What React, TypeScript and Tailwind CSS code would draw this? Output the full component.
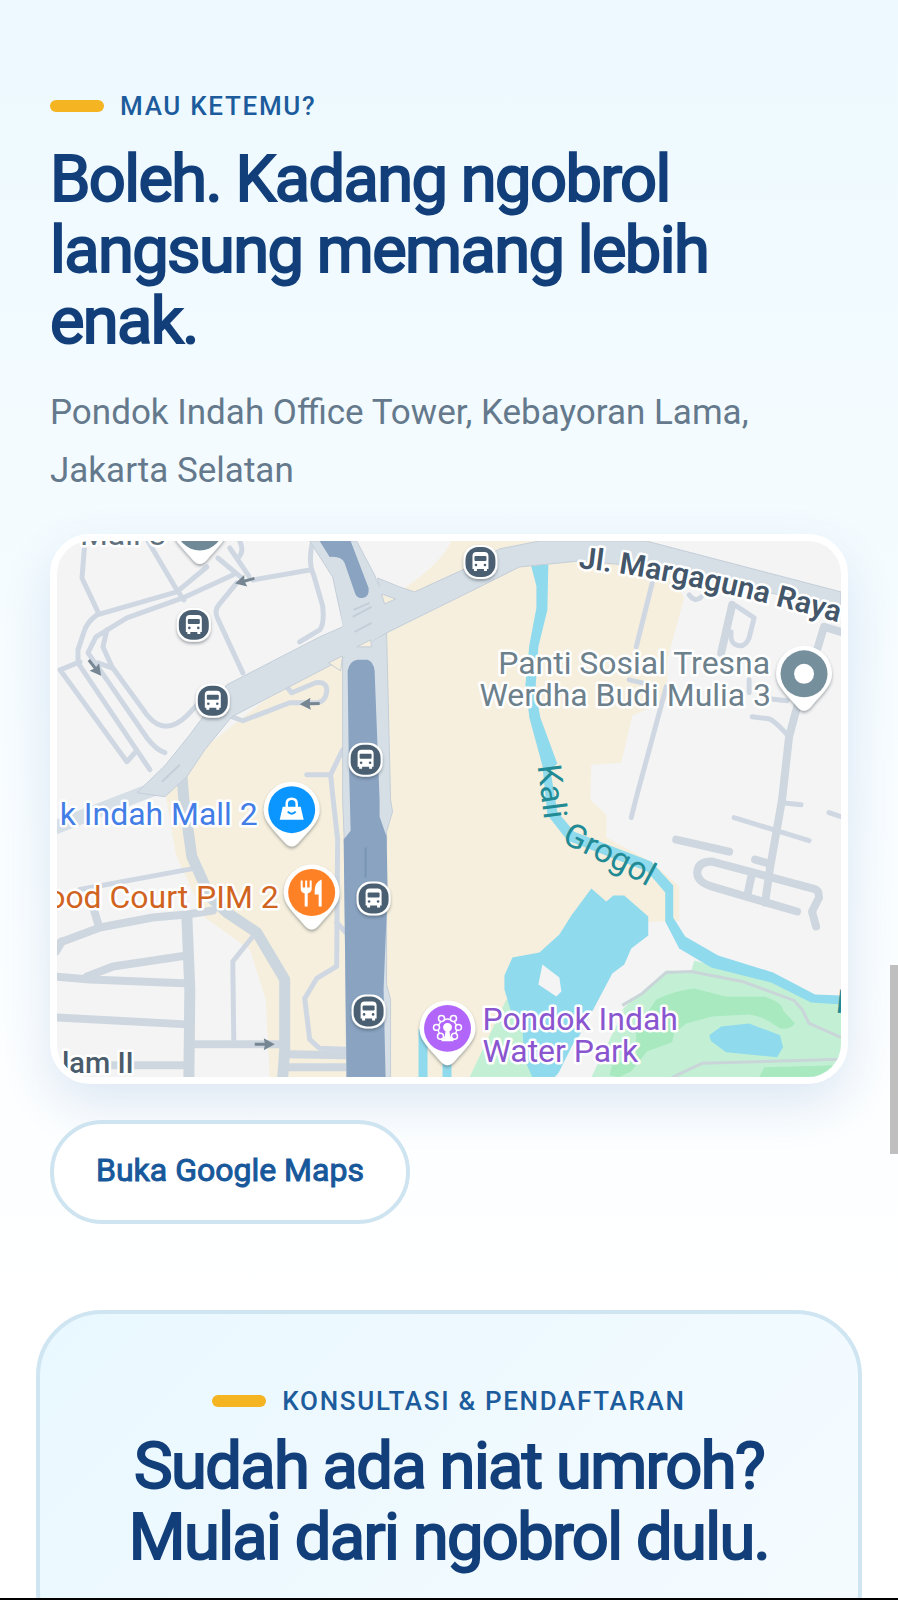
import type { ReactNode } from "react";

type Point = { x: number; y: number };

const busStops: Point[] = [
  { x: 194, y: 625 },
  { x: 213, y: 701 },
  { x: 481, y: 562 },
  { x: 366, y: 760 },
  { x: 374, y: 899 },
  { x: 369, y: 1012 },
];

const arrows = [
  { x: 245, y: 581, angle: 165 },
  { x: 95, y: 668, angle: 52 },
  { x: 310, y: 704, angle: 178 },
  { x: 265, y: 1045, angle: 0 },
];

const narrowRoads = [
  "M85 541 L82 578 L98 612",
  "M148 541 L177 590 L184 600",
  "M207 567 L177 592 L97 615 Q87 622 84 632 L78 650 L78 663 L150 770",
  "M233 575 L183 598 L127 618 L96 637 L88 653 L107 680 L147 738 Q156 750 165 753",
  "M107 630 L103 647 L112 667 L147 715 Q165 738 188 715 L205 697",
  "M80 662 L60 670 L127 762 L135 753",
  "M98 663 L112 668",
  "M237 583 L219 605 Q214 611 218 619 L243 673",
  "M253 580 L310 570",
  "M218 558 L242 578",
  "M230 548 L249 576",
  "M240 541 Q245 552 238 558",
  "M313 541 Q308 562 314 575 L323 606 Q325 624 320 630 L300 642",
  "M287 687 L292 693 L316 683 Q328 681 327 692 Q326 702 317 703 L290 703 L243 721 L232 717",
  "M307 775 L331 775 L343 750",
  "M331 775 L333 795 L338 840 L337 967 L317 979 L305 999 L310 1040 L320 1049 L347 1050",
  "M337 923 L348 935",
  "M80 890 L193 869",
  "M253 937 L233 962 L234 1042",
  "M653 583 L637 647",
  "M630 680 L643 683",
  "M667 687 L660 713 L637 798 L632 818",
  "M690 595 Q696 603 702 597",
  "M737 606 L755 618 L750 638 Q745 650 735 644 Q731 641 732 632",
  "M753 717 L770 719 Q776 721 790 737",
  "M750 680 L750 693 M770 699 L788 701",
  "M783 803 L802 805",
  "M830 813 L842 817",
  "M735 818 L810 841",
];

const streetRoads = [
  "M60 943 L100 928 L153 918 L187 915 L213 911",
  "M93 907 L99 927",
  "M87 977 L113 967 L187 956",
  "M56 952 L62 942",
  "M54 977 L90 980 L190 984",
  "M54 1018 L187 1025",
  "M107 1066 L187 1066",
  "M193 1045 L283 1045",
  "M288 1055 L347 1056",
  "M288 1068 L347 1068",
  "M733 605 L722 653",
  "M800 700 L790 737 L783 800 L771 868 L766 903",
  "M842 632 L825 627 L818 650",
  "M677 840 L730 852",
  "M756 860 L770 864",
  "M817 927 L813 912 L820 898 Q820 890 814 889 L773 878 L713 862 Q698 862 698 874 Q699 883 713 887 L798 912",
  "M752 878 L748 897",
];

const MapPin = ({
  x,
  y,
  color,
  children,
}: Point & { color: string; children?: ReactNode }) => (
  <g transform={`translate(${x} ${y})`}>
    <path
      d="M-28 0 A28 28 0 1 1 28 0 C28 12 18 20 7 33 Q0 41 -7 33 C-18 20 -28 12 -28 0Z"
      fill="#fff"
      filter="url(#pin-shadow)"
    />
    <circle r="23.5" fill={color} />
    {children}
  </g>
);

const BusStop = ({ x, y }: Point) => (
  <g transform={`translate(${x} ${y})`}>
    <rect
      x="-17"
      y="-17"
      width="34"
      height="34"
      rx="14"
      fill="#fff"
      filter="url(#pin-shadow)"
    />
    <rect x="-15" y="-15" width="30" height="30" rx="13" fill="#4a6072" />
    <path
      d="M-8 -6 Q-8 -10 -4 -10 H4 Q8 -10 8 -6 V7 H6.500 V9 H3.500 V7 H-3.500 V9 H-6.500 V7 H-8Z"
      fill="#fff"
    />
    <rect x="-6" y="-6" width="12" height="5" rx="1" fill="#4a6072" />
    <circle cx="-4.500" cy="3" r="1.300" fill="#4a6072" />
    <circle cx="4.500" cy="3" r="1.300" fill="#4a6072" />
  </g>
);

const LocationMap = () => (
  <svg
    viewBox="57 541 785 537"
    className="block w-full"
    role="img"
    aria-label="Pondok Indah"
    fontFamily="Roboto, sans-serif"
  >
    <defs>
      <filter id="pin-shadow" x="-30%" y="-30%" width="160%" height="170%">
        <feDropShadow
          dx="0"
          dy="2"
          stdDeviation="1.500"
          floodColor="#3c4650"
          floodOpacity="0.45"
        />
      </filter>
      <path id="main-street" d="M579 568 Q690 580 860 628" />
      <path id="kali" d="M538 766 L546 828" />
      <path id="grogol" d="M562 843 Q600 860 665 896" />
    </defs>

    <rect x="57" y="541" width="785" height="537" fill="#f4f4f4" />

    {/* commercial area */}
    <path
      d="M240 720 L330 650 L405 588 Q440 565 452 541 L653 541 L685 598 L668 660 L668 700 L633 716 L622 763 L592 765 L591 800 L607 815 L607 838 L653 863 L680 887 L680 921 L600 925 L507 1003 L470 1078 L270 1078 L266 1000 L250 950 L205 918 L176 855 L165 790 L190 760 Z"
      fill="#f6efdd"
    />

    {/* park */}
    <path
      d="M507 1000 L470 1078 L540 1078 L540 1000Z M583 1078 L603 1035 L625 1008 L667 971 L692 972 L695 961 L713 966 L775 981 L810 1000 L842 1003 L842 1078Z"
      fill="#c3f0d4"
    />
    <path
      d="M637 1030 L657 1000 Q675 991 695 989 L727 997 L765 997 Q784 1003 784 1011 L796 1024 Q790 1031 781 1029 Q765 1017 750 1015 L713 1017 L687 1024 L675 1034 L673 1043 L648 1052 L632 1072 L620 1078 L610 1076 L613 1066 L637 1057Z"
      fill="#a9e9c0"
    />
    <path d="M765 1068 L835 1066 L842 1078 L760 1078Z" fill="#a9e9c0" />
    <g fill="none" stroke="#c9d5d8" strokeWidth="3">
      <path d="M623 1006 L643 994 L667 973 L692 972 L743 982 L795 1001 L803 1010 L810 1024 L842 1038" />
      <path d="M673 1078 L703 1064 L842 1060" />
    </g>

    {/* water */}
    <g fill="#90daed">
      <path d="M710 1036 L722 1027 L750 1024 L781 1036 L784 1048 L778 1058 L727 1053 L712 1042Z" />
      <path d="M513 958 L540 953 L560 935 L572 916 L592 889 L607 902 L614 896 L625 896 L649 917 L649 936 L632 949 L625 965 L613 974 L595 1008 L577 1042 L563 1070 L555 1078 L533 1078 L525 1060 L523 1030 L511 1010 L505 990 L505 976Z" />
      <path d="M419 1030 H428 V1078 H419Z M443 1050 H452 V1078 H443Z" />
    </g>
    <path
      d="M543 965 L560 978 L562 992 L557 997 L539 985Z M575 1042 L625 1010 L592 1078 L557 1078Z"
      fill="#f4f4f4"
    />
    <path
      d="M531 563 L549 563 L548 610 L539 647 L536 690 L541 718 L558 764 L551 770 L558 812 L575 832 L652 862 L674 886 L674 918 L686 937 L719 956 L774 973 L816 995 L842 996 L842 1005 L812 1003 L772 983 L712 968 L680 949 L666 922 L666 893 L648 872 L568 841 L548 815 L543 766 L530 718 L526 685 L530 645 L537 608 L537 586Z"
      fill="#90daed"
    />

    {/* streets */}
    <g fill="none" strokeLinecap="round" strokeLinejoin="round">
      <g stroke="#cfd8e2" strokeWidth="5">
        {narrowRoads.map((d) => (
          <path key={d} d={d} />
        ))}
      </g>
      <g stroke="#ced7df" strokeWidth="8">
        {streetRoads.map((d) => (
          <path key={d} d={d} />
        ))}
      </g>
      <g stroke="#ccd6de" strokeWidth="11">
        <path d="M182 775 L184 800 L192 857 L210 897 L227 913 L257 933 L285 980 L285 1050 L283 1078" />
        <path d="M187 917 L190 990 L189 1084" />
      </g>
      <path d="M50 830 L90 814 L165 785" stroke="#d6dee6" strokeWidth="14" />
    </g>

    {/* main roads */}
    <g fill="#d6dfe6" stroke="#c4ced8" strokeWidth="1">
      <path d="M310 541 L357 541 L375 575 L384 600 L387 633 L391 800 L393 812 L387 832 L387 985 L391 1000 L391 1078 L347 1078 L345 850 L343 800 L343 623 L333 577Z" />
      <path d="M137 793 L165 766 L190 735 L227 685 L320 637 L345 626 L382 598 L378 578 L400 587 L415 592 L463 570 L500 549 L540 541 L647 541 L842 592 L842 608 L700 578 L640 566 L580 561 L520 567 L470 592 L387 633 L330 666 L232 717 L205 750 L187 777 L165 797Z" />
    </g>
    <path d="M341 605 L376 580 L386 598 L386 632 L345 661Z" fill="#d6dfe6" />
    <g fill="#f6efdd" stroke="#c4ced8" strokeWidth="1">
      <path d="M382 594 L396 599 L385 604Z" />
      <path d="M357 647 L371 640 L372 647Z" />
      <path d="M329 663 L343 656 L341 671Z" />
    </g>
    <path
      d="M354 610 L370 603 M353 617 L372 607 M355 632 L372 623 M162 782 L180 765"
      stroke="#c4ced8"
      strokeWidth="2"
    />
    <g fill="#89a3c1">
      <path d="M320 541 L351 541 L369 588 Q370 597 363 598 Q357 599 355 592 L345 563 Q342 556 330 557Z" />
      <path d="M348 671 Q350 661 358 660 L368 660 Q374 662 375 671 L380 800 L380 817 L387 837 L388 890 L384 990 L386 1078 L347 1078 L345 917 L344 840 L351 831 L349 750Z" />
    </g>
    <path d="M366 848 L366 878" stroke="#7894b5" strokeWidth="2" />

    {arrows.map((arrow) => (
      <path
        key={`${arrow.x}-${arrow.y}`}
        transform={`translate(${arrow.x} ${arrow.y}) rotate(${arrow.angle})`}
        d="M-10 -1.500 L0 -1.500 L-1 -6 L10 0 L-1 6 L0 1.500 L-10 1.500Z"
        fill="#768793"
      />
    ))}

    {busStops.map((stop) => (
      <BusStop key={`${stop.x}-${stop.y}`} {...stop} />
    ))}

    {/* labels */}
    <g
      fontSize="32"
      stroke="#fff"
      strokeWidth="5"
      strokeLinejoin="round"
      paintOrder="stroke"
    >
      <text x="80" y="545" fill="#5f707d">
        Mall 3
      </text>
      <text x="258" y="825" textAnchor="end" fill="#437de6">
        k Indah Mall 2
      </text>
      <text x="279" y="908" textAnchor="end" fill="#d0641f">
        ood Court PIM 2
      </text>
      <text x="771" y="674" textAnchor="end" fill="#6d818c">
        Panti Sosial Tresna
      </text>
      <text x="772" y="706" textAnchor="end" fill="#6d818c">
        Werdha Budi Mulia 3
      </text>
      <text x="483" y="1031" fill="#8a56cf">
        Pondok Indah
      </text>
      <text x="483" y="1063" fill="#8a56cf">
        Water Park
      </text>
      <text x="62" y="1074" fontSize="29" fontWeight="500" fill="#4a5c6c">
        lam II
      </text>
      <text fontSize="30" fontWeight="600" fill="#43566a">
        <textPath href="#main-street">Jl. Margaguna Raya</textPath>
      </text>
    </g>
    <g fontSize="33" fill="#218a94">
      <text>
        <textPath href="#kali">Kali</textPath>
      </text>
      <text>
        <textPath href="#grogol">Grogol</textPath>
      </text>
      <text transform="translate(836 1013) rotate(6)">K</text>
    </g>

    <MapPin x={200} y={527} color="#6f8997" />
    <MapPin x={805} y={674} color="#758f9c">
      <circle r="10" fill="#fff" />
    </MapPin>
    <MapPin x={292} y={810} color="#0a95ff">
      <path d="M-9 -3 H9 L12 10 H-12Z" fill="#fff" />
      <path
        d="M-5 -2 V-6 Q-5 -11 0 -11 Q5 -11 5 -6 V-2"
        fill="none"
        stroke="#fff"
        strokeWidth="2.500"
      />
      <path
        d="M-4 2 Q0 6 4 2"
        fill="none"
        stroke="#0a95ff"
        strokeWidth="2"
      />
    </MapPin>
    <MapPin x={312} y={893} color="#ff8126">
      <path
        d="M-11 -12 V-4 Q-11 0 -7 1 V14 H-4 V1 Q0 0 0 -4 V-12 H-2 V-5 H-4.500 V-12 H-6.500 V-5 H-9 V-12Z M10 -13 Q3 -10 3 -2 V2 H7 V14 H10Z"
        fill="#fff"
      />
    </MapPin>
    <MapPin x={448} y={1029} color="#b266f9">
      <g fill="none" stroke="#fff" strokeWidth="1.500">
        <circle r="9.500" />
        <g fill="#b266f9">
          <circle cx="-6" cy="-10" r="3" />
          <circle cx="6" cy="-10" r="3" />
          <circle cx="-11" cy="-1" r="3" />
          <circle cx="11" cy="-1" r="3" />
          <circle cx="-7" cy="8" r="3" />
          <circle cx="7" cy="8" r="3" />
        </g>
      </g>
      <path
        d="M-4.500 -1 A4.500 4.500 0 1 1 4.500 -1 Q4 2 2 3 L3 10 H6 V13 H-6 V10 H-3 L-2 3 Q-4 2 -4.500 -1Z"
        fill="#fff"
      />
    </MapPin>
  </svg>
);

const Eyebrow = ({ children }: { children: ReactNode }) => (
  <p className="inline-flex items-center gap-4 text-[26px] leading-8 font-medium tracking-[0.065em] text-[#1c5c9c]">
    <span className="h-3 w-[54px] rounded-full bg-[#f5b422]" />
    {children}
  </p>
);

const headingStyle =
  "text-[65px] leading-[71px] font-normal tracking-tight text-[#123f7a] [-webkit-text-stroke:2px_#123f7a]";

const App = () => {
  return (
    <div className="relative h-screen overflow-hidden bg-white font-[Roboto,sans-serif]">
      <section className="bg-linear-to-b from-[#edf9ff] via-[#f6fcff] to-white px-[50px] pt-[90px] pb-[86px]">
        <Eyebrow>MAU KETEMU?</Eyebrow>
        <h2 className={`mt-[22px] ${headingStyle}`}>
          Boleh. Kadang ngobrol langsung memang lebih enak.
        </h2>
        <p className="mt-[27px] text-[35px] leading-[58px] text-[#65798c]">
          Pondok Indah Office Tower, Kebayoran Lama, Jakarta Selatan
        </p>
        <div className="mt-[34px] overflow-hidden rounded-[40px] border-7 border-white bg-white shadow-[0_20px_50px_rgba(30,90,170,0.14)]">
          <LocationMap />
        </div>
        <a
          href="https://maps.google.com"
          className="relative mt-9 inline-flex h-[104px] items-center rounded-full border-4 border-[#cfe4f1] bg-white px-[42px] pb-1 text-[32px] text-[#17589b] [-webkit-text-stroke:1px_#17589b]"
        >
          Buka Google Maps
        </a>
      </section>

      <section className="mx-9 rounded-[66px] border-4 border-[#cfe6f2] bg-linear-135 from-[#e9f8ff] to-[#f5fbff] px-10 pt-[71px] pb-20 text-center">
        <Eyebrow>KONSULTASI &amp; PENDAFTARAN</Eyebrow>
        <h2 className={`mt-[14px] ${headingStyle}`}>
          Sudah ada niat umroh? Mulai dari ngobrol dulu.
        </h2>
      </section>

      <div className="absolute top-[965px] right-0 h-[189px] w-2 bg-[#bfbfbf]" />
      <div className="absolute inset-x-0 bottom-0 h-0.5 bg-black" />
    </div>
  );
};

export default App;
